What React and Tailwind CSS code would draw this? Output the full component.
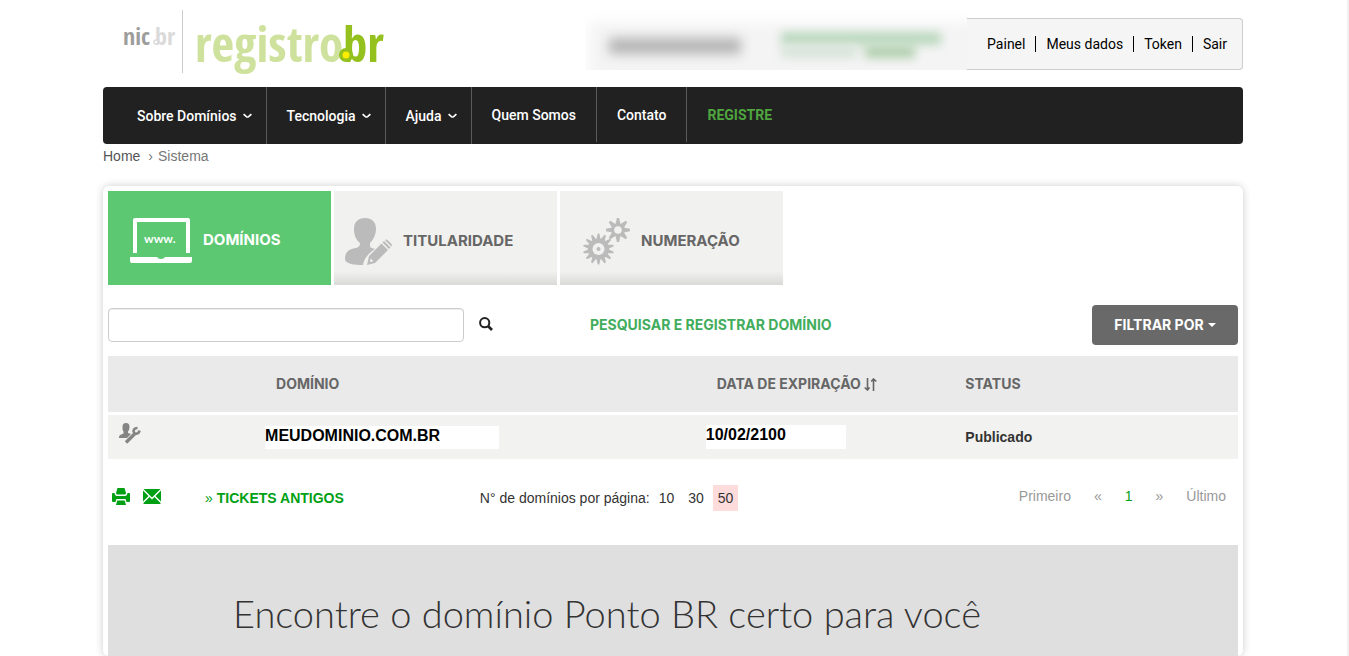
import React from "react";

const menu = [
  { label: "Sobre Domínios", submenu: true, className: "h-[57px] pl-[34px] pr-[14px]" },
  { label: "Tecnologia", submenu: true, className: "h-[57px] pl-5 pr-[14px]" },
  { label: "Ajuda", submenu: true, className: "h-[57px] pl-5 pr-[14px]" },
  { label: "Quem Somos", className: "h-[55px] px-5" },
  { label: "Contato", className: "h-[55px] px-5" },
];

const userLinks = ["Painel", "Meus dados", "Token", "Sair"];

const domains = [
  { name: "MEUDOMINIO.COM.BR", expires: "10/02/2100", status: "Publicado" },
];

// Pontos de uma engrenagem com dentes pontudos
const gearPoints = (cx, cy, outer, inner, teeth) => {
  const points = [];
  const step = (Math.PI * 2) / teeth;
  for (let i = 0; i < teeth; i++) {
    const a = i * step - Math.PI / 2;
    [[-0.42, inner], [-0.12, outer], [0.12, outer], [0.42, inner]].forEach(([off, r]) => {
      const angle = a + off * step;
      points.push(`${(cx + r * Math.cos(angle)).toFixed(2)},${(cy + r * Math.sin(angle)).toFixed(2)}`);
    });
  }
  return points.join(" ");
};

function Logo() {
  return (
    <svg width="290" height="85" viewBox="0 0 290 85" role="img" aria-label="nic.br registro.br">
      <g fontFamily="'Open Sans Condensed', 'Roboto Condensed', 'Liberation Sans Narrow', sans-serif" fontWeight="700">
        <text x="20" y="45" fontSize="24" fill="#9d9d9c">nic</text>
        <text x="52" y="45" fontSize="24" fill="#dadada">br</text>
        <text x="92" y="62" fontSize="49" fill="#cfe29d">registro</text>
        <text x="240" y="62" fontSize="49" fill="#95c11f">br</text>
      </g>
      <circle cx="53" cy="42" r="2" fill="#fff" stroke="#dadada" strokeWidth="1.5" />
      <rect x="79" y="10" width="1" height="63" fill="#ccc" />
      <circle cx="243" cy="55" r="7" fill="#95c11f" />
      <circle cx="243" cy="55" r="3.5" fill="#ffed00" />
    </svg>
  );
}

function ChevronIcon() {
  return (
    <svg width="9" height="6" viewBox="0 0 9 6" fill="none" stroke="currentColor" strokeWidth="1.7" aria-hidden="true">
      <path d="M.6 1.2L3.4 3.6Q4.500 4.400 5.600 3.600L8.400 1.200" />
    </svg>
  );
}

function LaptopIcon() {
  return (
    <svg width="62" height="45" viewBox="0 0 62 45" fill="#fff" aria-hidden="true">
      <path d="M3 35V2Q3 0 5 0H58Q60 0 60 2V35H56V4H7V35Z" />
      <path d="M0 39H27Q28 41 31 41T35 39H62V43Q62 45 60 45H2Q0 45 0 43Z" />
      <text x="14" y="25" fontSize="12" fontFamily="Lato, sans-serif" fontWeight="700">www.</text>
    </svg>
  );
}

function OwnerIcon() {
  return (
    <svg width="47" height="47" viewBox="0 0 47 47" fill="#bbb" aria-hidden="true">
      <path d="M20 0C27 0 31 4 31 11C31 17 28 22 25 25V28C25 30 28 30 30 31C24 35 19 40 18 47C10 47 0 46 0 41C0 32 6 31 11 30C14 29 15 28 15 25C11 22 9 17 9 11C9 4 13 0 20 0Z" />
      <path fillRule="evenodd" d="M22 47L24 38L36.500 25.500L43 32L30 45ZM25.500 40.500L25 44L28.500 43.300Z" />
      <path d="M37.500 24.500L39 23L45.500 29.500L44 31ZM40 22Q41.500 21 43 22.500L46 25.500Q47.500 27 46.300 28.500Z" />
    </svg>
  );
}

function GearsIcon() {
  return (
    <svg width="47" height="47" viewBox="0 0 47 47" aria-hidden="true">
      <g fill="#bbb">
        <polygon points={gearPoints(15.5, 31, 15.5, 10.5, 14)} />
        <polygon points={gearPoints(35, 12, 12, 7, 8)} />
      </g>
      <circle cx="35" cy="12" r="3.8" fill="#f1f1ef" />
      <circle cx="15.5" cy="31" r="6" fill="#f1f1ef" />
      <circle cx="15.5" cy="31" r="2" fill="#bbb" />
    </svg>
  );
}

function SearchIcon() {
  return (
    <svg width="14" height="14" viewBox="0 0 14 14" fill="none" stroke="#222" aria-hidden="true">
      <circle cx="5.7" cy="5.7" r="4.6" strokeWidth="2" />
      <path d="M9 9L13 13" strokeWidth="2.6" />
    </svg>
  );
}

function UserWrenchIcon() {
  return (
    <svg width="22" height="21" viewBox="0 0 22 21" aria-hidden="true">
      <path fill="#858585" d="M7 0C9.500 0 10.500 1.500 10.500 4C10.500 6 9.800 7.500 9 8.500V10L12 11L8 15H0C0 12 1 12 4.500 10.500V8.500C3.700 7.500 3.500 6 3.500 4C3.500 1.500 4.500 0 7 0Z" />
      <path fill="none" stroke="#858585" strokeWidth="3.400" d="M7 19.500L16 10.500" />
      <path fill="none" stroke="#858585" strokeWidth="2.600" d="M18.500 5C15 5 13.800 7.500 15 9.500S20 11 20.500 7.500" />
    </svg>
  );
}

function SortIcon() {
  return (
    <svg width="13" height="13" viewBox="0 0 13 13" fill="none" stroke="currentColor" strokeWidth="1.600" aria-hidden="true">
      <path d="M3.500 0V12M.7 9.500L3.500 12L5.500 9.500M9.500 13V1M7.200 3.500L9.500 1L12.300 3.500" />
    </svg>
  );
}

function PrintIcon() {
  return (
    <svg width="18" height="17" viewBox="0 0 18 17" fill="#00a015" aria-hidden="true">
      <path d="M5.500 0H12.500L14 5Q14 6.500 12.500 6.500H5.500Q4 6.500 4 5Z" />
      <path d="M0 6Q0 5 1 5H2.500Q3 8 5 8H13Q15 8 15.500 5H17Q18 5 18 6V13Q18 14 17 14H14.500L13.500 11H4.500L3.500 14H1Q0 14 0 13Z" />
      <path d="M5.300 12.500H12.700L14 17H4Z" />
    </svg>
  );
}

function MailIcon() {
  return (
    <svg width="18" height="15" viewBox="0 0 18 15" fill="#00a015" aria-hidden="true">
      <path d="M.5 0H17.500L9 8.500ZM0 1.500L5.500 7L0 12.500ZM18 1.500L12.500 7L18 12.500ZM.5 15V14L6.500 8L9 10.500L11.500 8L17.500 14V15Z" />
    </svg>
  );
}

function Header() {
  return (
    <header className="flex h-[87px] justify-between">
      <a href="#inicio">
        <Logo />
      </a>
      <div className="flex h-[70px] items-end">
        <div className="relative h-[60px] w-[382px] overflow-hidden" aria-hidden="true">
          <div className="absolute -right-5 -bottom-5 left-1 top-3 bg-[#f4f4f4] blur-[6px]" />
          <div className="absolute left-6 top-7 h-4 w-[132px] bg-[#b4b4b4] blur-[6px]" />
          <div className="absolute left-[196px] top-[22px] h-[13px] w-[160px] bg-[#bad8be] blur-[5px]" />
          <div className="absolute left-[196px] top-9 h-3 w-[76px] bg-[#d8e3da] blur-[5px]" />
          <div className="absolute left-[280px] top-9 h-3 w-[50px] bg-[#b0cfad] blur-[5px]" />
        </div>
        <nav className="flex h-[52px] items-center rounded-r border border-l-0 border-[#ccc] bg-[#f5f5f5] pl-[10px] pr-[5px] text-sm text-black">
          {userLinks.map((link, index) => (
            <a
              key={link}
              href="#conta"
              className={index > 0 ? "border-l border-black px-[10px] leading-4" : "px-[10px] leading-4"}
            >
              {link}
            </a>
          ))}
        </nav>
      </div>
    </header>
  );
}

function MainMenu() {
  return (
    <nav className="flex h-[57px] items-start rounded bg-[#212121] text-sm font-medium text-white">
      {menu.map((item) => (
        <a
          key={item.label}
          href="#menu"
          className={`flex items-center gap-[6px] border-r border-[#5a5a5a] ${item.className}`}
        >
          {item.label}
          {item.submenu && <ChevronIcon />}
        </a>
      ))}
      <a href="#registre" className="flex h-[55px] items-center px-5 font-bold text-[#4fa53e]">
        REGISTRE
      </a>
    </nav>
  );
}

function Tabs() {
  return (
    <div className="flex gap-[3px] font-[Inter,sans-serif] text-[15px] font-bold text-[#666]">
      <button className="flex h-[94px] w-[223px] items-center gap-[11px] bg-[#5cc872] pl-[22px] pt-1 text-white">
        <LaptopIcon />
        DOMÍNIOS
      </button>
      <button className="flex h-[94px] w-[223px] items-center gap-[11px] bg-linear-to-b from-[#f1f1ef] from-85% to-[#dadad8] pl-[11px] pt-[6px]">
        <OwnerIcon />
        TITULARIDADE
      </button>
      <button className="flex h-[94px] w-[223px] items-center gap-[11px] bg-linear-to-b from-[#f1f1ef] from-85% to-[#dadad8] pl-[23px] pt-[6px]">
        <GearsIcon />
        NUMERAÇÃO
      </button>
    </div>
  );
}

function DomainTable() {
  return (
    <table className="mt-[11px] w-full table-fixed border-separate border-spacing-0 text-left">
      <colgroup>
        <col className="w-[13.9%]" />
        <col className="w-[39%]" />
        <col className="w-[22%]" />
        <col />
      </colgroup>
      <thead>
        <tr className="h-14 bg-[#eaeaea] font-[Inter,sans-serif] text-sm text-[#666]">
          <th aria-label="Ações" />
          <th className="pl-[11px]">DOMÍNIO</th>
          <th className="pl-[11px]">
            <button className="flex items-center gap-[3px]">
              DATA DE EXPIRAÇÃO
              <SortIcon />
            </button>
          </th>
          <th className="pl-[11px]">STATUS</th>
        </tr>
      </thead>
      <tbody>
        {domains.map((domain) => (
          <tr key={domain.name} className="h-[47px] bg-[#f2f2f0] font-bold">
            <td className="border-t-[3px] border-white pb-[7px] pl-[11px]">
              <UserWrenchIcon />
            </td>
            <td className="border-t-[3px] border-white">
              <div className="h-[23px] w-[234px] bg-white text-base leading-5 text-black">{domain.name}</div>
            </td>
            <td className="border-t-[3px] border-white">
              <div className="h-6 w-[140px] bg-white text-base leading-5 text-black">{domain.expires}</div>
            </td>
            <td className="border-t-[3px] border-white pl-[11px] text-sm text-[#333]">{domain.status}</td>
          </tr>
        ))}
      </tbody>
    </table>
  );
}

function TableFooter() {
  return (
    <div className="flex h-[86px] items-start justify-between pt-[26px] text-sm">
      <div className="flex h-[26px] items-center">
        <button aria-label="Imprimir" className="ml-1 pb-[3px]">
          <PrintIcon />
        </button>
        <button aria-label="Enviar por e-mail" className="ml-[13px] pb-[3px]">
          <MailIcon />
        </button>
        <a href="#tickets" className="ml-11 flex gap-1 text-[#00a015]">
          <span>»</span>
          <span className="font-bold">TICKETS ANTIGOS</span>
        </a>
        <div className="ml-[136px] flex items-center text-[#333]">
          <span className="mr-1">N° de domínios por página:</span>
          <a href="#10" className="px-[5px] leading-[26px]">10</a>
          <a href="#30" className="ml-1 px-[5px] leading-[26px]">30</a>
          <a href="#50" className="ml-1 bg-[#ffdcdc] px-[5px] leading-[26px]">50</a>
        </div>
      </div>
      <nav className="flex gap-[23px] pr-3 leading-[22px] text-[#999]">
        <a href="#primeiro">Primeiro</a>
        <a href="#anterior">«</a>
        <a href="#1" className="text-[#00a015]">1</a>
        <a href="#proximo">»</a>
        <a href="#ultimo">Último</a>
      </nav>
    </div>
  );
}

function App() {
  return (
    <div className="min-h-screen overflow-hidden border-r-2 border-[#f1f1f1] bg-white pr-px font-['Liberation_Sans',Arial,sans-serif]">
      <div className="mx-auto max-w-[1140px]">
        <div className="font-[Roboto,sans-serif]">
          <Header />
          <MainMenu />
        </div>
        <div className="flex h-[42px] gap-2 pt-[2px] text-sm text-[#777]">
          <a href="#home" className="text-[#555]">Home</a>
          <span className="flex gap-[5px]">
            <span>›</span>
            Sistema
          </span>
        </div>
        <main className="rounded-md bg-white px-[5px] pt-[5px] shadow-[0_0_8px_rgba(0,0,0,0.2)]">
          <Tabs />
          <div className="mt-5 flex h-10 items-center font-[Inter,sans-serif] text-sm font-bold">
            <input
              type="text"
              aria-label="Pesquisar domínio"
              className="h-[34px] w-[356px] rounded border border-[#ccc] px-3 font-normal shadow-[inset_0_1px_1px_rgba(0,0,0,0.075)]"
            />
            <button aria-label="Pesquisar" className="ml-[15px] pb-[3px]">
              <SearchIcon />
            </button>
            <a href="#pesquisar" className="ml-[97px] text-[#41ad5c]">PESQUISAR E REGISTRAR DOMÍNIO</a>
            <button className="ml-auto flex h-10 w-[146px] items-center justify-center gap-1 rounded bg-[#696969] text-white">
              FILTRAR POR
              <span className="border-x-4 border-t-4 border-x-transparent border-t-white" />
            </button>
          </div>
          <DomainTable />
          <TableFooter />
          <section className="bg-[#dfdfdf] pb-[19px] pl-[125px] pt-11">
            <h1 className="font-[Lato,sans-serif] text-[38px] font-light leading-[48px] text-[#333]">
              Encontre o domínio Ponto BR certo para você
            </h1>
          </section>
        </main>
      </div>
    </div>
  );
}

export default App;
